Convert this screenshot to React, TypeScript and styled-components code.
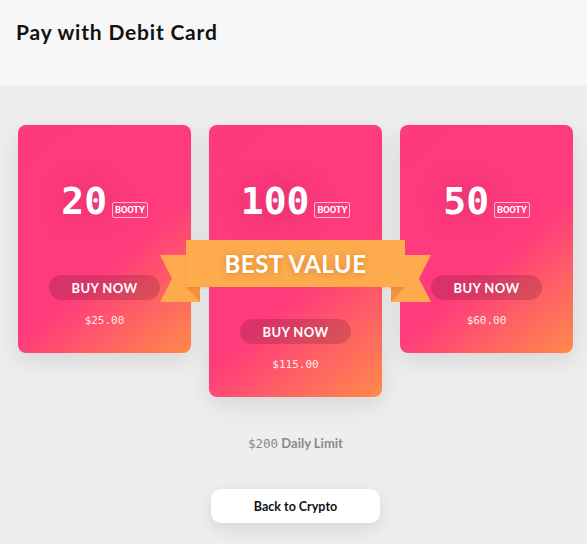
import React from "react";
import styled, {createGlobalStyle} from "styled-components";

const GlobalStyle = createGlobalStyle`
  html, body {
    margin: 0;
    padding: 0;
    background: #eeeeee;
    font-family: "Lato", "Noto Sans", sans-serif;
  }
`;

const Page = styled.div`
  display: flex;
  flex-flow: column;
  min-height: 544px;
  background: #eeeeee;
`;

const Header = styled.header`
  height: 85px;
  background: #f7f7f7;
  padding: 19px 16px 0;
  box-sizing: border-box;

  & h1 {
    margin: 0;
    font-size: 21px;
    font-weight: 700;
    color: #111;
    letter-spacing: 0.8px;
  }
`;

const Main = styled.main`
  display: flex;
  flex-flow: column;
  align-items: center;
  padding: 40px 14px 0 18px;
`;

const Cards = styled.div`
  display: flex;
  align-items: flex-start;
  gap: 18px;
`;

const Card = styled.div`
  width: 173px;
  display: flex;
  flex-flow: column;
  align-items: center;
  padding: 57px 0 25px;
  border-radius: 8px;
  background: linear-gradient(140deg, #ff397e 0%, #ff3b7c 58%, #ff8a4a 100%);
  box-shadow: 0 8px 24px rgba(0, 0, 0, 0.1);
`;

const Amount = styled.div`
  display: flex;
  align-items: baseline;
  gap: 5px;
  height: 38px;
`;

const Number = styled.span`
  font-family: "DejaVu Sans Mono", monospace;
  font-weight: 700;
  font-size: 38px;
  line-height: 38px;
  color: #fff;
  text-shadow: 0 0 26px rgba(120, 20, 80, 0.35);
`;

const Badge = styled.span`
  font-family: Roboto, "Liberation Sans", sans-serif;
  font-weight: 700;
  font-size: 9.5px;
  line-height: 12px;
  letter-spacing: -0.2px;
  color: #fff;
  padding: 1px 2px 1px;
  border: 1px solid rgba(255, 255, 255, 0.65);
  border-radius: 2px;
  position: relative;
  top: -1px;
`;

const Ribbon = styled.div`
  position: relative;
  z-index: 2;
  align-self: stretch;
  margin: 20px -23px 0 -23px;
  height: 47px;
`;

const Tail = styled.svg<{ $side: "left" | "right" }>`
  position: absolute;
  top: 15px;
  ${p => p.$side === "left" ? "left: -26px;" : "right: -26px;"}
  width: 40px;
  height: 47px;
`;

const Band = styled.div`
  position: relative;
  height: 47px;
  display: flex;
  align-items: center;
  justify-content: center;
  background: #fdab4d;
  box-shadow: 0 1px 2px rgba(200, 110, 30, 0.25);
  font-size: 24px;
  font-weight: 700;
  letter-spacing: 0.5px;
  color: #fff;
  text-shadow: 0 1px 6px rgba(150, 70, 0, 0.35);
`;

const BuyButton = styled.button<{ $gap: number }>`
  margin-top: ${p => p.$gap}px;
  width: 111px;
  height: 25px;
  border: none;
  border-radius: 13px;
  background: rgba(0, 0, 0, 0.15);
  color: #fff;
  font-family: "Lato", "Noto Sans", sans-serif;
  font-weight: 700;
  font-size: 13px;
  letter-spacing: 0.4px;
  cursor: pointer;
`;

const Price = styled.div`
  margin-top: 14px;
  font-family: "DejaVu Sans Mono", monospace;
  font-size: 11px;
  line-height: 14px;
  color: rgba(255, 255, 255, 0.9);
`;

const Limit = styled.div`
  margin-top: 38px;
  font-size: 13px;
  font-weight: 700;
  color: #8a8a8a;

  & span {
    font-family: "DejaVu Sans Mono", monospace;
    font-weight: 400;
    font-size: 12.5px;
  }
`;

const BackButton = styled.button`
  margin-top: 38px;
  width: 169px;
  height: 34px;
  border: none;
  border-radius: 10px;
  background: #fff;
  box-shadow: 0 6px 18px rgba(0, 0, 0, 0.1);
  font-family: "Lato", "Noto Sans", sans-serif;
  font-weight: 700;
  font-size: 12.5px;
  color: #111;
  cursor: pointer;
`;

const packs = [
    {amount: 20, price: "25.00"},
    {amount: 100, price: "115.00", best: true},
    {amount: 50, price: "60.00"},
];

const RibbonTail: React.FC<{ side: "left" | "right" }> = ({side}) => (
    <Tail $side={side} viewBox="0 0 40 47">
        <g transform={side === "right" ? "translate(40 0) scale(-1 1)" : undefined}>
            <polygon points="0,0 40,0 40,47 0,47 12,23.5" fill="#fdab4d"/>
            <polygon points="26,32 40,32 40,47" fill="#f2923a"/>
        </g>
    </Tail>
);

export default function App() {
    return <Page>
        <GlobalStyle/>
        <Header><h1>Pay with Debit Card</h1></Header>
        <Main>
            <Cards>
                {packs.map(pack => (
                    <Card key={pack.amount}>
                        <Amount>
                            <Number>{pack.amount}</Number>
                            <Badge>BOOTY</Badge>
                        </Amount>
                        {pack.best && <Ribbon>
                            <RibbonTail side="left"/>
                            <RibbonTail side="right"/>
                            <Band>BEST VALUE</Band>
                        </Ribbon>}
                        <BuyButton $gap={pack.best ? 32 : 55}>BUY NOW</BuyButton>
                        <Price>${pack.price}</Price>
                    </Card>
                ))}
            </Cards>
            <Limit><span>$200</span> Daily Limit</Limit>
            <BackButton>Back to Crypto</BackButton>
        </Main>
    </Page>;
}
